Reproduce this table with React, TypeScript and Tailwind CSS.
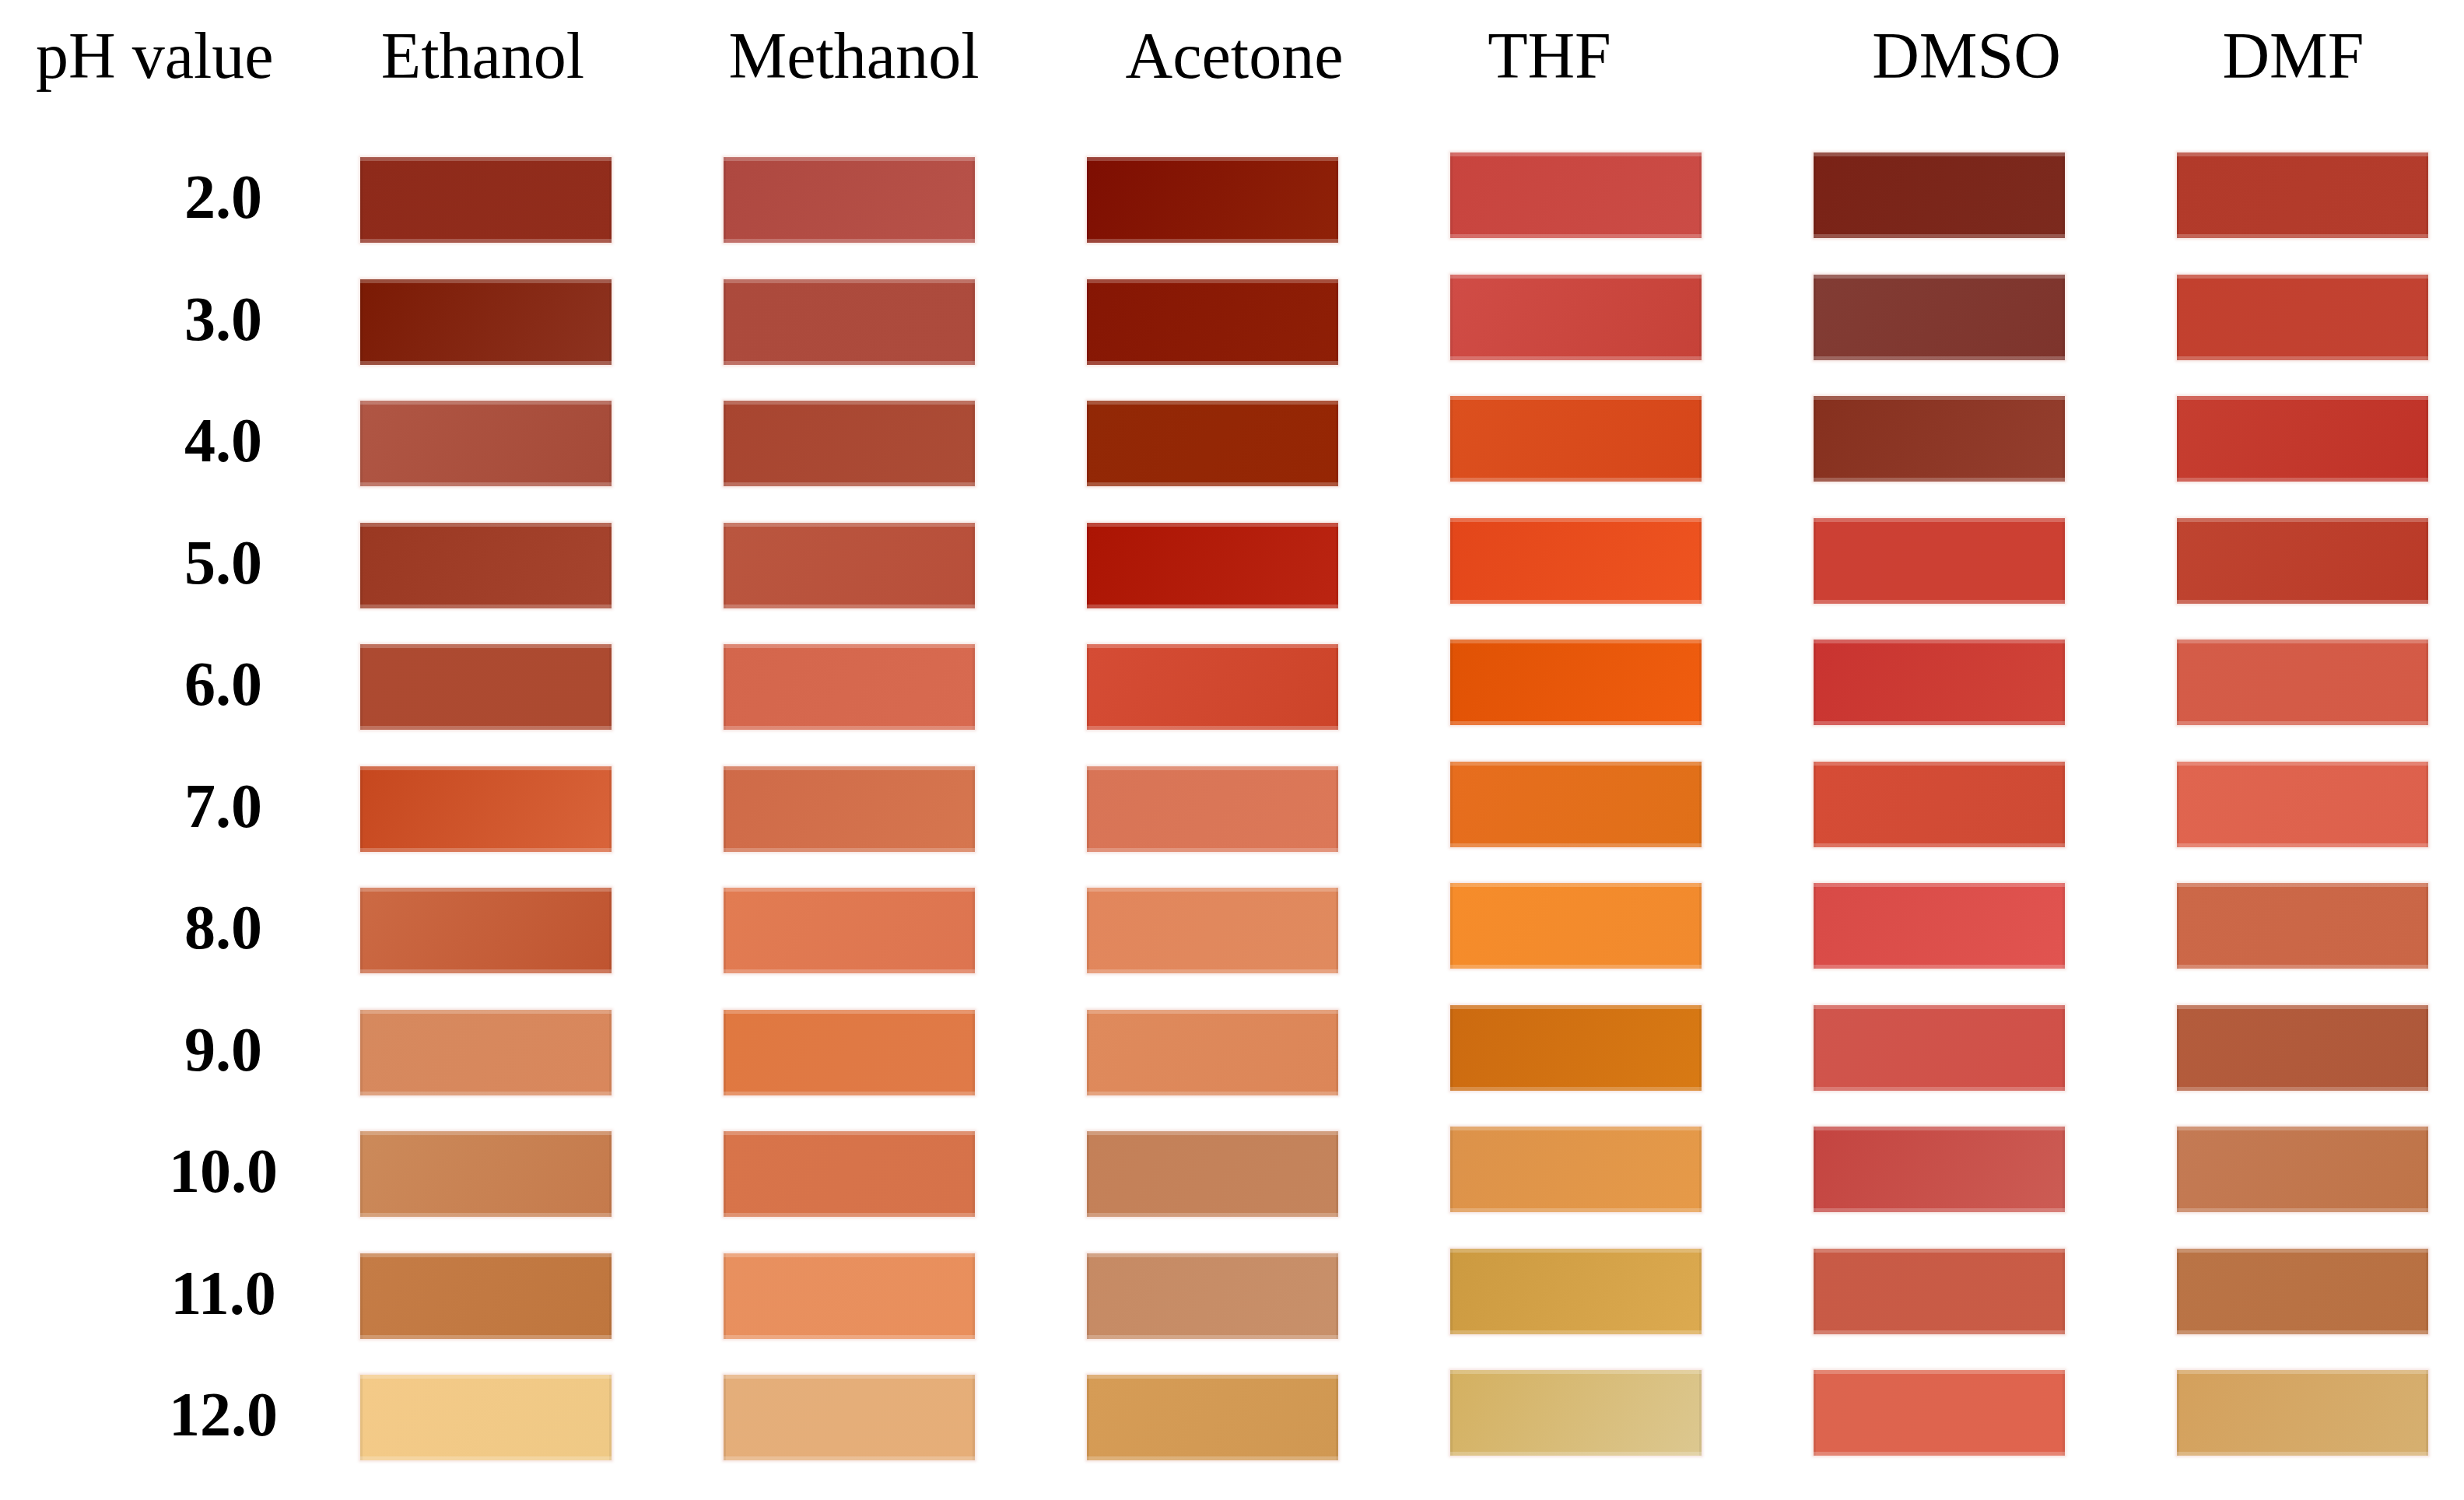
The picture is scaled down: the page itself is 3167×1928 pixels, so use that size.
import React from "react";

type Col = {
  name: string;
  shift: string;
  top: string;
  colors: [string, string][];
};

const labels = ["2.0", "3.0", "4.0", "5.0", "6.0", "7.0", "8.0", "9.0", "10.0", "11.0", "12.0"];

const cols: Col[] = [
  {
    name: "Ethanol",
    shift: "-translate-x-[4px]",
    top: "mt-[88px]",
    colors: [
      ["#8e2a1a", "#922d1c"],
      ["#7b1a04", "#8e3320"],
      ["#b05644", "#a54a38"],
      ["#9a3822", "#a6442e"],
      ["#ad4a31", "#ac4a30"],
      ["#c6471e", "#d9643a"],
      ["#cc6a44", "#bf5430"],
      ["#d6895e", "#d9875c"],
      ["#cc8a5a", "#c57a4c"],
      ["#c57c46", "#bf763e"],
      ["#f4ca88", "#efc985"],
    ],
  },
  {
    name: "Methanol",
    shift: "translate-x-[6px]",
    top: "mt-[88px]",
    colors: [
      ["#ae4840", "#b85249"],
      ["#ac4a3c", "#ad4b3d"],
      ["#a84530", "#ac4c36"],
      ["#ba563f", "#b84f3a"],
      ["#d4664c", "#d86a50"],
      ["#cf6a48", "#d6764f"],
      ["#e27c52", "#dd7450"],
      ["#e07840", "#e07a48"],
      ["#d8744a", "#d6724a"],
      ["#e8905f", "#e98f5c"],
      ["#e4ae7a", "#e6ae78"],
    ],
  },
  {
    name: "Acetone",
    shift: "translate-x-[28px]",
    top: "mt-[88px]",
    colors: [
      ["#7e0e02", "#902208"],
      ["#861604", "#8f1f06"],
      ["#922806", "#962604"],
      ["#ab1403", "#bb2512"],
      ["#d54c35", "#cd4429"],
      ["#d87456", "#dc7858"],
      ["#e2865c", "#e08a5e"],
      ["#df8a5c", "#dc8658"],
      ["#c48058", "#c4845c"],
      ["#c68a64", "#c8906a"],
      ["#d69c56", "#d09852"],
    ],
  },
  {
    name: "THF",
    shift: "-translate-x-[34px]",
    top: "mt-[82px]",
    colors: [
      ["#c8443e", "#cb4c46"],
      ["#d04c46", "#c64238"],
      ["#dc501e", "#d6461a"],
      ["#e3461a", "#ee5420"],
      ["#e05204", "#f05d10"],
      ["#e76d1e", "#e07018"],
      ["#f68c2a", "#f18a2e"],
      ["#cc6a10", "#d87a14"],
      ["#dc924a", "#e69a48"],
      ["#cc9a40", "#dcaa50"],
      ["#d4b060", "#dcc890"],
    ],
  },
  {
    name: "DMSO",
    shift: "translate-x-[35px]",
    top: "mt-[82px]",
    colors: [
      ["#7a2216", "#7c2a1e"],
      ["#823c34", "#7e342c"],
      ["#86301e", "#943e2e"],
      ["#cc4034", "#cc4032"],
      ["#c93330", "#d04438"],
      ["#d64c36", "#ce4a34"],
      ["#d84a46", "#e15450"],
      ["#d0554c", "#d05048"],
      ["#c44440", "#cc5c54"],
      ["#c85a46", "#c95c46"],
      ["#dc644e", "#e0644e"],
    ],
  },
  {
    name: "DMF",
    shift: "-translate-x-[12px]",
    top: "mt-[82px]",
    colors: [
      ["#b23a2a", "#b43c2c"],
      ["#c2402e", "#c24232"],
      ["#c63e30", "#c03228"],
      ["#bf4430", "#ba3a28"],
      ["#d45c48", "#d45a46"],
      ["#e0654f", "#dd604c"],
      ["#cc6848", "#ca6646"],
      ["#b45c3c", "#ae583a"],
      ["#c47a54", "#bf7448"],
      ["#ba7446", "#b87042"],
      ["#d4a05c", "#d6b070"],
    ],
  },
];

function Swatch({ c }: { c: [string, string] }) {
  return (
    <div
      className="h-[110px] w-[323px] shadow-[0_0_3px_2px_rgba(200,110,90,0.18),inset_0_5px_0_rgba(255,255,255,0.22),inset_0_-5px_0_rgba(255,255,255,0.22),inset_3px_0_0_rgba(0,0,0,0.06),inset_-3px_0_0_rgba(0,0,0,0.06)]"
      style={{ background: `linear-gradient(120deg, ${c[0]}, ${c[1]})` }}
    />
  );
}

export default function App() {
  return (
    <div className="min-h-screen w-[3167px] bg-white font-['Liberation_Serif','Times_New_Roman',serif] text-black">
      <div className="flex pt-[30px]">
        <div className="flex w-[463px] flex-col">
          <div className="pl-[46px] text-[84px] leading-[84px] whitespace-nowrap">pH value</div>
          <div className="mt-[88px] flex flex-col gap-[46.5px] pl-[111px]">
            {labels.map((l) => (
              <div
                key={l}
                className="flex h-[110px] items-center justify-center pb-[8px] text-[80px] font-bold leading-none"
              >
                {l}
              </div>
            ))}
          </div>
        </div>
        <div className="flex gap-[144px]">
          {cols.map((col) => (
            <div key={col.name} className="flex w-[323px] flex-col">
              <div
                className={`text-center text-[84px] leading-[84px] whitespace-nowrap ${col.shift}`}
              >
                {col.name}
              </div>
              <div className={`flex flex-col gap-[46.5px] ${col.top}`}>
                {col.colors.map((c, i) => (
                  <Swatch key={i} c={c} />
                ))}
              </div>
            </div>
          ))}
        </div>
      </div>
    </div>
  );
}
